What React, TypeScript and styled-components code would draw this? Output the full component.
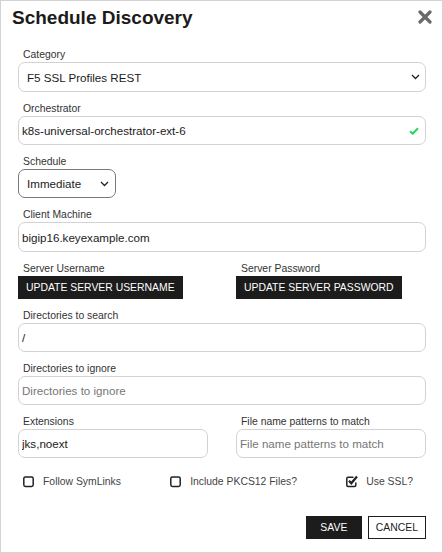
import React from "react";
import styled, { createGlobalStyle } from "styled-components";

const Global = createGlobalStyle`
  html, body { margin: 0; padding: 0; background: #fff; }
  body { font-family: "Liberation Sans", Arial, sans-serif; }
  * { box-sizing: border-box; }
`;

const Dialog = styled.div`
  width: 443px;
  height: 553px;
  border: 1px solid #d3d3d3;
  background: #fff;
  display: flex;
  flex-direction: column;
`;

const Header = styled.div`
  display: flex;
  align-items: flex-start;
  justify-content: space-between;
  padding: 6px 10px 0 11px;
`;

const Title = styled.h1`
  margin: 0;
  font-size: 19px;
  line-height: 22px;
  font-weight: 700;
  color: #1b1b1b;
`;

const CloseButton = styled.button`
  border: 0;
  background: none;
  padding: 0;
  margin-top: 3px;
  width: 14px;
  height: 14px;
  display: flex;
  cursor: pointer;
`;

const Body = styled.div`
  display: flex;
  flex-direction: column;
  padding: 0 16px 0 17px;
  margin-top: 20px;
`;

const Form = styled.div`
  display: flex;
  flex-direction: column;
  gap: 11px;
`;

const Field = styled.div`
  display: flex;
  flex-direction: column;
  min-width: 0;
`;

const Label = styled.label`
  font-size: 10.4px;
  line-height: 12px;
  color: #333;
  padding-left: 5px;
  margin-bottom: 1px;
  white-space: nowrap;
`;

const ControlWrap = styled.div<{ $width?: string }>`
  position: relative;
  width: ${(p) => p.$width ?? "100%"};
`;

const Input = styled.input<{ $h?: number }>`
  width: 100%;
  height: ${(p) => p.$h ?? 29}px;
  border: 1px solid #d2d2d2;
  border-radius: 7px;
  padding: 0 3px;
  font-family: "Liberation Sans", Arial, sans-serif;
  font-size: 11.6px;
  color: #1b1b1b;
  background: #fff;
  outline: none;
  &::placeholder { color: #767676; }
`;

const Select = styled.select<{ $dark?: boolean; $h?: number }>`
  appearance: none;
  -webkit-appearance: none;
  width: 100%;
  height: ${(p) => p.$h ?? 30}px;
  border: 1px solid ${(p) => (p.$dark ? "#7a7a7a" : "#d2d2d2")};
  border-radius: 7px;
  padding: 0 20px 0 8px;
  font-family: "Liberation Sans", Arial, sans-serif;
  font-size: 11.6px;
  color: #1b1b1b;
  background: #fff;
  outline: none;
`;

const Overlay = styled.span<{ $right: number }>`
  position: absolute;
  right: ${(p) => p.$right}px;
  top: 50%;
  transform: translateY(-50%);
  display: flex;
  pointer-events: none;
`;

const TwoCol = styled.div`
  display: grid;
  grid-template-columns: 1fr 1fr;
  column-gap: 28px;
`;

const DarkButton = styled.button`
  align-self: flex-start;
  height: 23px;
  padding: 0 8px;
  border: 0;
  border-radius: 0;
  background: #1c1c1c;
  color: #fff;
  font-family: "Liberation Sans", Arial, sans-serif;
  font-size: 10.4px;
  white-space: nowrap;
  cursor: pointer;
`;

const CheckRow = styled.div`
  display: flex;
  justify-content: space-between;
  align-items: center;
  padding: 0 13px 0 4px;
  margin-top: 17px;
`;

const CheckItem = styled.label`
  display: flex;
  align-items: center;
  gap: 8px;
  font-size: 10.4px;
  color: #444;
  line-height: 13px;
`;

const Footer = styled.div`
  display: flex;
  justify-content: flex-end;
  gap: 6px;
  margin-top: 28px;
`;

const FooterButton = styled.button<{ $primary?: boolean }>`
  height: 23px;
  padding: 0 7px;
  min-width: 56px;
  border: 1px solid #1c1c1c;
  border-radius: 0;
  background: ${(p) => (p.$primary ? "#1c1c1c" : "#fff")};
  color: ${(p) => (p.$primary ? "#fff" : "#1c1c1c")};
  font-family: "Liberation Sans", Arial, sans-serif;
  font-size: 10.4px;
  cursor: pointer;
`;

const Chevron = () => (
  <svg width="9" height="6" viewBox="0 0 9 6">
    <path d="M1 1 L4.5 4.5 L8 1" fill="none" stroke="#222" strokeWidth="1.3" />
  </svg>
);

const GreenCheck = () => (
  <svg width="10" height="8" viewBox="0 0 10 8">
    <path d="M1 4.2 L3.7 6.7 L9 1.2" fill="none" stroke="#2fd36a" strokeWidth="2.1" />
  </svg>
);

const CloseIcon = () => (
  <svg width="14" height="14" viewBox="0 0 14 14">
    <path d="M2 2 L12 12 M12 2 L2 12" stroke="#6a6a6a" strokeWidth="3.2" strokeLinecap="round" />
  </svg>
);

const BoxIcon = ({ checked }: { checked?: boolean }) =>
  checked ? (
    <svg width="13" height="13" viewBox="0 0 13 13">
      <path
        d="M8.5 2.2 H3 Q1.8 2.2 1.8 3.4 V10.2 Q1.8 11.4 3 11.4 H9.6 Q10.8 11.4 10.8 10.2 V7.5"
        fill="none"
        stroke="#222"
        strokeWidth="1.5"
      />
      <path d="M4 5.8 L6.3 8.2 L12 1.5" fill="none" stroke="#222" strokeWidth="2.3" />
    </svg>
  ) : (
    <svg width="13" height="13" viewBox="0 0 13 13">
      <rect x="1.8" y="2" width="9.4" height="9.4" rx="1.6" fill="none" stroke="#222" strokeWidth="1.5" />
    </svg>
  );

export default function App() {
  return (
    <>
      <Global />
      <Dialog>
        <Header>
          <Title>Schedule Discovery</Title>
          <CloseButton aria-label="Close">
            <CloseIcon />
          </CloseButton>
        </Header>
        <Body>
          <Form>
            <Field>
              <Label>Category</Label>
              <ControlWrap>
                <Select defaultValue="f5">
                  <option value="f5">F5 SSL Profiles REST</option>
                </Select>
                <Overlay $right={6}>
                  <Chevron />
                </Overlay>
              </ControlWrap>
            </Field>
            <Field>
              <Label>Orchestrator</Label>
              <ControlWrap>
                <Input defaultValue="k8s-universal-orchestrator-ext-6" />
                <Overlay $right={7}>
                  <GreenCheck />
                </Overlay>
              </ControlWrap>
            </Field>
            <Field>
              <Label>Schedule</Label>
              <ControlWrap $width="98px">
                <Select $dark $h={29} defaultValue="imm">
                  <option value="imm">Immediate</option>
                </Select>
                <Overlay $right={7}>
                  <Chevron />
                </Overlay>
              </ControlWrap>
            </Field>
            <Field>
              <Label>Client Machine</Label>
              <Input $h={30} defaultValue="bigip16.keyexample.com" />
            </Field>
            <TwoCol>
              <Field>
                <Label>Server Username</Label>
                <DarkButton>UPDATE SERVER USERNAME</DarkButton>
              </Field>
              <Field>
                <Label>Server Password</Label>
                <DarkButton>UPDATE SERVER PASSWORD</DarkButton>
              </Field>
            </TwoCol>
            <Field>
              <Label>Directories to search</Label>
              <Input defaultValue="/" />
            </Field>
            <Field>
              <Label>Directories to ignore</Label>
              <Input placeholder="Directories to ignore" />
            </Field>
            <TwoCol>
              <Field>
                <Label>Extensions</Label>
                <Input defaultValue="jks,noext" />
              </Field>
              <Field>
                <Label>File name patterns to match</Label>
                <Input placeholder="File name patterns to match" />
              </Field>
            </TwoCol>
          </Form>
          <CheckRow>
            <CheckItem>
              <BoxIcon />
              Follow SymLinks
            </CheckItem>
            <CheckItem>
              <BoxIcon />
              Include PKCS12 Files?
            </CheckItem>
            <CheckItem>
              <BoxIcon checked />
              Use SSL?
            </CheckItem>
          </CheckRow>
          <Footer>
            <FooterButton $primary>SAVE</FooterButton>
            <FooterButton>CANCEL</FooterButton>
          </Footer>
        </Body>
      </Dialog>
    </>
  );
}
